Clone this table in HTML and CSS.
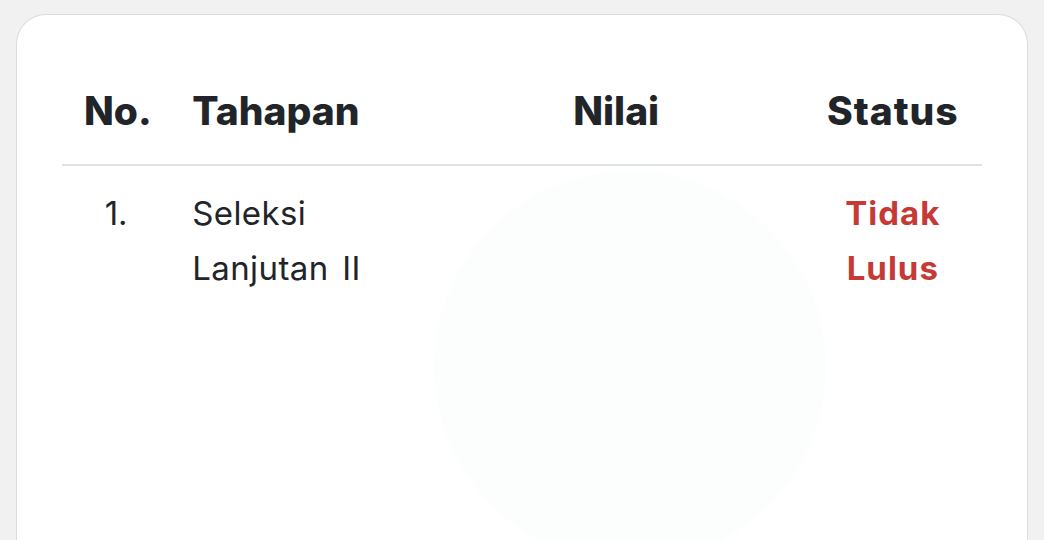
FILE: index.html
```html
<!DOCTYPE html>
<html lang="id">
<head>
  <meta charset="UTF-8">
  <meta name="viewport" content="width=device-width, initial-scale=1.0">
  <title>Hasil Seleksi</title>

  <link rel="stylesheet" href="styles.css">
</head>
<body>
  <div class="card">
    <table class="result-table">
      <colgroup>
        <col class="col-no">
        <col class="col-stage">
        <col class="col-score">
        <col class="col-status">
      </colgroup>
      <thead>
        <tr>
          <th class="center">No.</th>
          <th>Tahapan</th>
          <th class="center">Nilai</th>
          <th class="center status-head">Status</th>
        </tr>
      </thead>
      <tbody>
        <tr>
          <td class="center">1.</td>
          <td class="stage">Seleksi<br>Lanjutan II</td>
          <td class="center"></td>
          <td class="center status-fail">Tidak<br>Lulus</td>
        </tr>
      </tbody>
    </table>
  </div>
</body>
</html>
```

FILE: styles.css
```css
body {
  font-family: Inter, "Noto Sans", sans-serif;
  margin: 0;
  padding: 14px 16px 0 16px;
  background: #f1f1f1;
  color: #212529;
}

.card {
  background: #ffffff;
  /* faint watermark behind the table */
  background-image: radial-gradient(circle at 613px 352px, #fcfdfd 0, #fcfdfd 195px, #ffffff 197px);
  border: 1px solid #dcdcdc;
  border-bottom: none;
  border-radius: 30px 30px 0 0;
  padding: 48px 45px 0 45px;
  height: 526px;
  box-sizing: border-box;
}

.result-table {
  width: 100%;
  border-collapse: collapse;
  table-layout: fixed;
}

.col-no { width: 108px; }
.col-stage { width: 258px; }
.col-score { width: 374px; }
.col-status { width: 178px; }

th {
  font-size: 39px;
  font-weight: 800;
  text-align: left;
  padding: 25px 22px 29px 22px;
  line-height: 1.2;
  border-bottom: 2px solid #dee2e6;
}

th.status-head {
  letter-spacing: 1px;
}

td {
  font-size: 33px;
  font-weight: 400;
  line-height: 55px;
  padding: 20px 22px;
  vertical-align: top;
}

td.stage {
  letter-spacing: 0.4px;
  word-spacing: 4px;
}

.center {
  text-align: center;
}

.status-fail {
  color: #c63a35;
  font-weight: 700;
  letter-spacing: 1px;
}
```
